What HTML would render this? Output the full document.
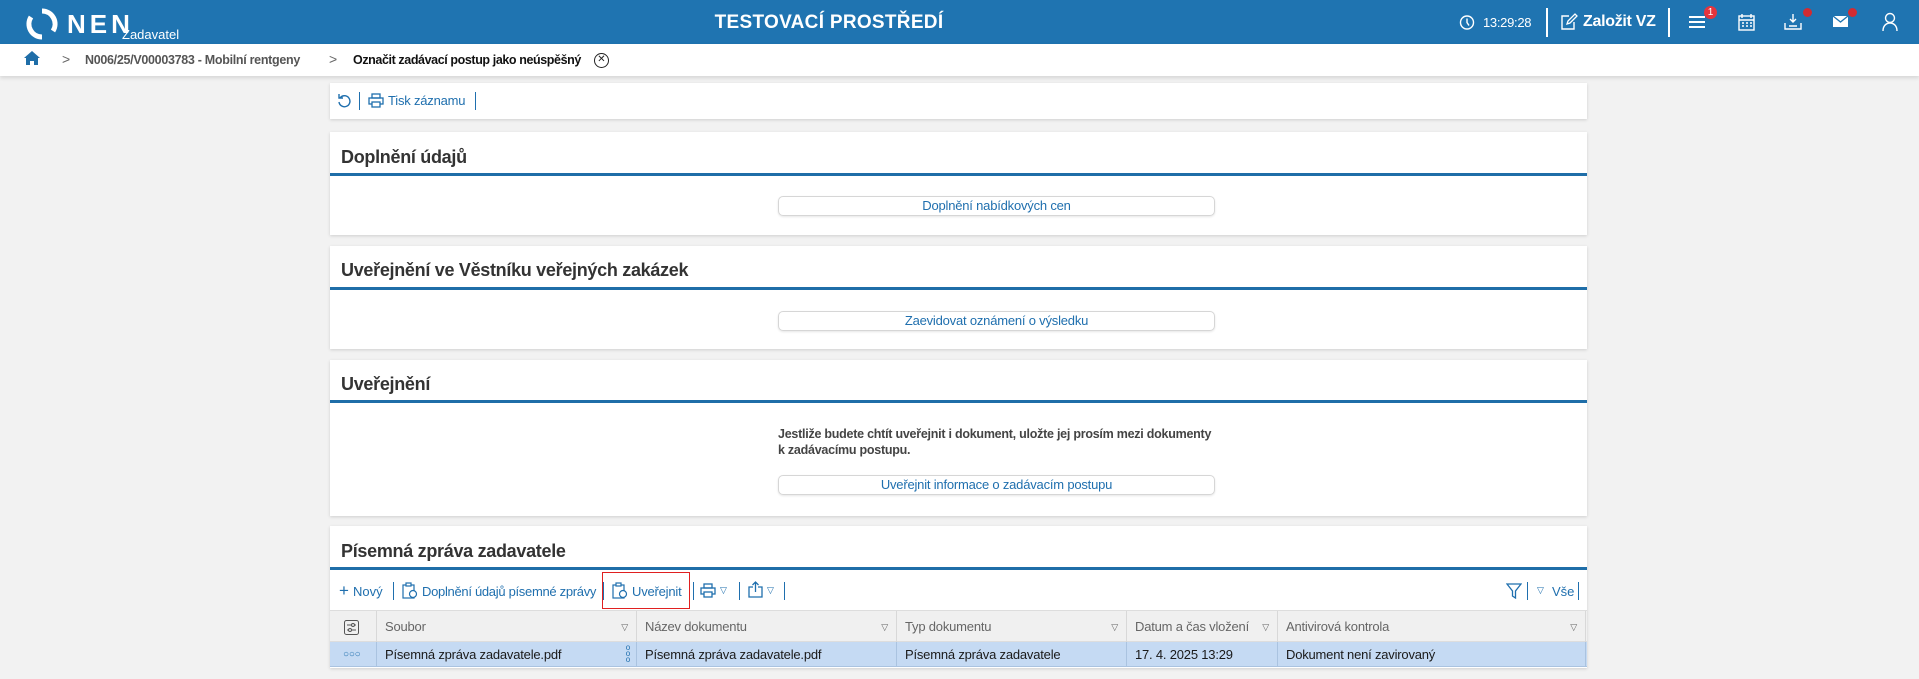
<!DOCTYPE html>
<html><head><meta charset="utf-8"><style>
*{box-sizing:border-box;margin:0;padding:0}
body{width:1919px;height:679px;background:#f2f2f2;font-family:"Liberation Sans",sans-serif;position:relative;overflow:hidden;color:#333}
.a{position:absolute}
.hdr{left:0;top:0;width:1919px;height:44px;background:#1f74b1}
.bc{left:0;top:44px;width:1919px;height:32px;background:#fff;box-shadow:0 2px 4px rgba(0,0,0,.12)}
.panel{position:absolute;left:330px;width:1257px;background:#fff;box-shadow:0 1px 3px rgba(0,0,0,.15)}
.title{position:absolute;left:11px;font-size:18px;font-weight:bold;color:#333;letter-spacing:-.3px}
.line{position:absolute;left:0;width:100%;height:3px;background:#1f6ea8}
.btn{position:absolute;left:448px;width:437px;height:20px;border:1px solid #d6d6d6;border-radius:5px;box-shadow:0 1px 2px rgba(0,0,0,.1);color:#1f6fae;font-size:13px;text-align:center;line-height:18px;letter-spacing:-.2px}
.blue{color:#1f6fae}
.th{position:absolute;top:0;height:32px;line-height:32px;font-size:13px;color:#666;border-right:1px solid #d8d8d8;padding-left:8px;letter-spacing:-.2px}
.td{position:absolute;top:0;height:25px;line-height:25px;font-size:13px;color:#1a1a1a;border-right:1px solid #aac3e0;padding-left:8px;letter-spacing:-.2px}
.tri{position:absolute;right:8px;font-size:9px;color:#666}
.sep{position:absolute;width:1px;height:18px;background:#1f6fae}
</style></head><body>
<div class="a hdr">
 <svg class="a" style="left:26px;top:8px" width="32" height="32" viewBox="0 0 32 32"><path d="M16 3a13 13 0 0 1 11 20" stroke="#fff" stroke-width="5" fill="none"/><path d="M16 29A13 13 0 0 1 5 9" stroke="#fff" stroke-width="5" fill="none"/></svg>
 <div class="a" style="left:67px;top:9px;font-size:26px;font-weight:bold;color:#fff;letter-spacing:4px">NEN</div>
 <div class="a" style="left:122px;top:27px;font-size:13px;color:#fff">Zadavatel</div>
 <div class="a" style="left:706px;top:12px;width:246px;text-align:center;font-size:19px;font-weight:bold;color:#fff;letter-spacing:.3px">TESTOVACÍ PROSTŘEDÍ</div>
 <svg class="a" style="left:1459px;top:14px" width="16" height="17" viewBox="0 0 16 17"><circle cx="8" cy="8.5" r="6.5" stroke="#fff" stroke-width="1.4" fill="none"/><path d="M8 4.5v4l2 3" stroke="#fff" stroke-width="1.4" fill="none"/></svg>
 <div class="a" style="left:1483px;top:15px;font-size:13px;color:#fff;letter-spacing:-.3px">13:29:28</div>
 <div class="a" style="left:1546px;top:8px;width:2px;height:29px;background:#fff"></div>
 <svg class="a" style="left:1560px;top:13px" width="18" height="18" viewBox="0 0 18 18"><path d="M9 3H2v13h12V9" stroke="#fff" stroke-width="1.4" fill="none"/><path d="M7 11l1-3 7-7 2 2-7 7z" stroke="#fff" stroke-width="1.3" fill="none"/></svg>
 <div class="a" style="left:1583px;top:13px;font-size:16px;font-weight:bold;color:#fff;letter-spacing:-.3px">Založit VZ</div>
 <div class="a" style="left:1668px;top:8px;width:2px;height:29px;background:#fff"></div>
 <div class="a" style="left:1689px;top:16px;width:16px;height:2px;background:#fff;box-shadow:0 5px 0 #fff,0 10px 0 #fff"></div>
 <div class="a" style="left:1704px;top:6px;width:13px;height:13px;border-radius:50%;background:#e5343d;color:#fff;font-size:10px;text-align:center;line-height:13px">1</div>
 <svg class="a" style="left:1738px;top:13px" width="17" height="18" viewBox="0 0 17 18"><rect x="1" y="3" width="15" height="14" fill="none" stroke="#fff" stroke-width="1.4"/><path d="M4 1v4M13 1v4M1 7h15M4 10h2M8 10h2M12 10h2M4 13h2M8 13h2M12 13h2" stroke="#fff" stroke-width="1.4"/></svg>
 <svg class="a" style="left:1784px;top:13px" width="18" height="18" viewBox="0 0 18 18"><path d="M9 1v8M6 6l3 3 3-3M1 10v6h16v-6M5 13h8" stroke="#fff" stroke-width="1.4" fill="none"/></svg>
 <div class="a" style="left:1803px;top:8px;width:9px;height:9px;border-radius:50%;background:#d22b31"></div>
 <svg class="a" style="left:1832px;top:15px" width="17" height="13" viewBox="0 0 17 13"><rect x="1" y="1" width="15" height="11" fill="#fff"/><path d="M1 1l7.5 6L16 1" stroke="#1f74b1" stroke-width="1.3" fill="none"/></svg>
 <div class="a" style="left:1848px;top:8px;width:9px;height:9px;border-radius:50%;background:#d22b31"></div>
 <svg class="a" style="left:1882px;top:12px" width="16" height="20" viewBox="0 0 16 20"><circle cx="8" cy="6" r="4.5" stroke="#fff" stroke-width="1.4" fill="none"/><path d="M1 19c0-5 3-8 7-8s7 3 7 8" stroke="#fff" stroke-width="1.4" fill="none"/></svg>
</div>
<div class="a bc">
 <svg class="a" style="left:23px;top:6px" width="18" height="16" viewBox="0 0 18 16"><path d="M9 1L1 8h2v7h4v-4h4v4h4V8h2z" fill="#1f6ea8"/></svg>
 <div class="a" style="left:62px;top:7px;font-size:14px;color:#666">&gt;</div>
 <div class="a" style="left:85px;top:9px;font-size:12.5px;font-weight:bold;color:#555;letter-spacing:-.3px">N006/25/V00003783 - Mobilní rentgeny</div>
 <div class="a" style="left:329px;top:7px;font-size:14px;color:#666">&gt;</div>
 <div class="a" style="left:353px;top:9px;font-size:12.5px;font-weight:bold;color:#111;letter-spacing:-.4px">Označit zadávací postup jako neúspěšný</div>
 <div class="a" style="left:594px;top:9px;width:15px;height:15px;border:1.5px solid #222;border-radius:50%;font-size:10px;line-height:12px;text-align:center;color:#222">✕</div>
</div>

<div class="panel" style="top:83px;height:36px">
 <svg class="a" style="left:7px;top:10px" width="15" height="15" viewBox="0 0 15 15"><path d="M3 5a5.5 5.5 0 1 1-1 4" stroke="#1f6fae" stroke-width="1.4" fill="none"/><path d="M2 1v4h4" stroke="#1f6fae" stroke-width="1.4" fill="none"/></svg>
 <div class="sep" style="left:29px;top:9px"></div>
 <svg class="a" style="left:38px;top:10px" width="16" height="15" viewBox="0 0 16 15"><rect x="4" y="1" width="8" height="4" fill="none" stroke="#1f6fae" stroke-width="1.3"/><rect x="1" y="5" width="14" height="6" fill="none" stroke="#1f6fae" stroke-width="1.3"/><rect x="4" y="9" width="8" height="5" fill="#fff" stroke="#1f6fae" stroke-width="1.3"/></svg>
 <div class="a blue" style="left:58px;top:10px;font-size:13px;letter-spacing:-.2px">Tisk záznamu</div>
 <div class="sep" style="left:145px;top:9px"></div>
</div>

<div class="panel" style="top:132px;height:103px">
 <div class="title" style="top:15px">Doplnění údajů</div>
 <div class="line" style="top:41px"></div>
 <div class="btn" style="top:64px">Doplnění nabídkových cen</div>
</div>
<div class="panel" style="top:246px;height:103px">
 <div class="title" style="top:14px">Uveřejnění ve Věstníku veřejných zakázek</div>
 <div class="line" style="top:41px"></div>
 <div class="btn" style="top:65px">Zaevidovat oznámení o výsledku</div>
</div>
<div class="panel" style="top:360px;height:156px">
 <div class="title" style="top:14px">Uveřejnění</div>
 <div class="line" style="top:40px"></div>
 <div class="a" style="left:448px;top:66px;font-size:12.5px;font-weight:bold;color:#444;line-height:16px;letter-spacing:-.25px">Jestliže budete chtít uveřejnit i dokument, uložte jej prosím mezi dokumenty<br>k zadávacímu postupu.</div>
 <div class="btn" style="top:115px">Uveřejnit informace o zadávacím postupu</div>
</div>
<div class="panel" style="top:526px;height:142px">
 <div class="title" style="top:15px">Písemná zpráva zadavatele</div>
 <div class="line" style="top:41px"></div>
 <div class="a blue" style="left:9px;top:55px;font-size:17px">+</div>
 <div class="a blue" style="left:23px;top:58px;font-size:13px">Nový</div>
 <div class="sep" style="left:63px;top:56px"></div>
 <svg class="a" style="left:72px;top:56px" width="16" height="17" viewBox="0 0 16 17"><rect x="1" y="3" width="11" height="13" fill="none" stroke="#1f6fae" stroke-width="1.2"/><rect x="4" y="1" width="5" height="3" fill="#fff" stroke="#1f6fae" stroke-width="1.2"/><circle cx="11" cy="12" r="3.5" fill="#fff" stroke="#1f6fae" stroke-width="1.2"/></svg>
 <div class="a blue" style="left:92px;top:58px;font-size:13px;letter-spacing:-.3px">Doplnění údajů písemné zprávy</div>
 <div class="sep" style="left:273px;top:56px"></div>
 <div class="a" style="left:272px;top:46px;width:88px;height:37px;border:1px solid #e02020"></div>
 <svg class="a" style="left:282px;top:56px" width="16" height="17" viewBox="0 0 16 17"><rect x="1" y="3" width="11" height="13" fill="none" stroke="#1f6fae" stroke-width="1.2"/><rect x="4" y="1" width="5" height="3" fill="#fff" stroke="#1f6fae" stroke-width="1.2"/><circle cx="11" cy="12" r="3.5" fill="#fff" stroke="#1f6fae" stroke-width="1.2"/></svg>
 <div class="a blue" style="left:302px;top:58px;font-size:13px;letter-spacing:-.2px">Uveřejnit</div>
 <div class="sep" style="left:363px;top:56px"></div>
 <svg class="a" style="left:370px;top:57px" width="16" height="15" viewBox="0 0 16 15"><rect x="4" y="1" width="8" height="4" fill="none" stroke="#1f6fae" stroke-width="1.3"/><rect x="1" y="5" width="14" height="6" fill="none" stroke="#1f6fae" stroke-width="1.3"/><rect x="4" y="9" width="8" height="5" fill="#fff" stroke="#1f6fae" stroke-width="1.3"/></svg>
 <div class="a blue" style="left:390px;top:59px;font-size:9px">▽</div>
 <div class="sep" style="left:409px;top:56px"></div>
 <svg class="a" style="left:418px;top:55px" width="15" height="17" viewBox="0 0 15 17"><path d="M5 6H1v10h13V6h-4M7.5 11V1M4.5 4l3-3 3 3" stroke="#1f6fae" stroke-width="1.3" fill="none"/></svg>
 <div class="a blue" style="left:437px;top:59px;font-size:9px">▽</div>
 <div class="sep" style="left:454px;top:56px"></div>
 <svg class="a" style="left:1176px;top:57px" width="16" height="16" viewBox="0 0 16 16"><path d="M1 1h14L9.5 8v7L6.5 13V8z" stroke="#1f6fae" stroke-width="1.3" fill="none"/></svg>
 <div class="sep" style="left:1197px;top:56px"></div>
 <div class="a blue" style="left:1207px;top:59px;font-size:9px">▽</div>
 <div class="a blue" style="left:1222px;top:58px;font-size:13px">Vše</div>
 <div class="sep" style="left:1248px;top:56px"></div>
 <div class="a" style="left:0;top:84px;width:1257px;height:32px;background:#f0f0f0;border-top:1px solid #ddd;border-bottom:1px solid #ddd">
  <div class="th" style="left:0;width:47px"><svg style="position:absolute;left:14px;top:9px" width="15" height="15" viewBox="0 0 15 15"><rect x=".5" y=".5" width="14" height="14" rx="2" fill="none" stroke="#555"/><path d="M3 5h9M3 10h9" stroke="#555"/><circle cx="9" cy="5" r="1.5" fill="#f0f0f0" stroke="#555"/><circle cx="6" cy="10" r="1.5" fill="#f0f0f0" stroke="#555"/></svg></div>
  <div class="th" style="left:47px;width:260px">Soubor<span class="tri">▽</span></div>
  <div class="th" style="left:307px;width:260px">Název dokumentu<span class="tri">▽</span></div>
  <div class="th" style="left:567px;width:230px">Typ dokumentu<span class="tri">▽</span></div>
  <div class="th" style="left:797px;width:151px">Datum a čas vložení<span class="tri">▽</span></div>
  <div class="th" style="left:948px;width:308px">Antivirová kontrola<span class="tri">▽</span></div>
 </div>
 <div class="a" style="left:0;top:116px;width:1257px;height:25px;background:#c5daf3;border-bottom:1px solid #aac3e0">
  <div class="td" style="left:0;width:47px;color:#1f6fae;font-size:10px;padding-left:13px">○○○</div>
  <div class="td" style="left:47px;width:260px">Písemná zpráva zadavatele.pdf<span style="position:absolute;right:6px;top:0;color:#1f6fae;font-size:8px;line-height:6px;padding-top:3px">o<br>o<br>o</span></div>
  <div class="td" style="left:307px;width:260px">Písemná zpráva zadavatele.pdf</div>
  <div class="td" style="left:567px;width:230px">Písemná zpráva zadavatele</div>
  <div class="td" style="left:797px;width:151px">17. 4. 2025 13:29</div>
  <div class="td" style="left:948px;width:308px">Dokument není zavirovaný</div>
 </div>
</div>
</body></html>
